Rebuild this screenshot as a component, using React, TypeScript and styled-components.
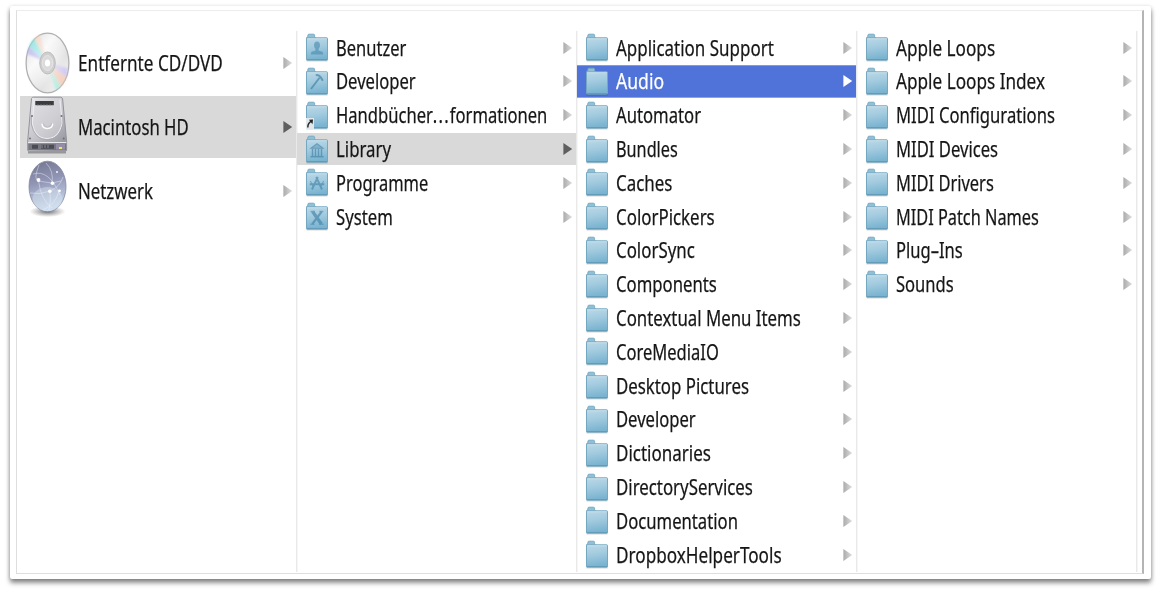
import React, { useLayoutEffect, useRef, useState } from "react";
import styled, { createGlobalStyle } from "styled-components";

const GlobalStyle = createGlobalStyle`
  * { box-sizing: border-box; }
  html, body { margin: 0; background: #fff; overflow: hidden; }
  body { font-family: "Noto Sans", "Open Sans", sans-serif; }
`;

type Tone = "none" | "grey" | "blue";
type Glyph = "user" | "hammer" | "alias" | "library" | "apps" | "system";
type Entry = { name: string; width: number; tone?: Tone; glyph?: Glyph };

const Page = styled.div`
  width: 1158px;
  height: 593px;
  padding: 6px 7px 13px 10px;
`;

const Card = styled.div`
  width: 1141px;
  height: 573px;
  padding: 4px 7px 5px 6px;
  background: #fff;
  border-radius: 2px;
  box-shadow: 0 4px 5px rgba(0, 0, 0, 0.42), 0 1px 4px rgba(0, 0, 0, 0.2);
`;

const Frame = styled.div`
  display: flex;
  width: 1128px;
  height: 564px;
  padding: 20px 0 1px 3px;
  border: 1px solid #dedede;
  border-top-color: #ececec;
  border-right: 2px solid #b4b4b4;
`;

const Column = styled.div<{ $width: number; $top?: number }>`
  display: flex;
  flex-direction: column;
  flex: none;
  width: ${(p) => p.$width}px;
  padding-top: ${(p) => p.$top ?? 0.4}px;
  border-right: 1px solid #e9e9e9;
  box-shadow: 1px 0 0 #f5f5f5;
`;

const rowTone = {
  none: "background: transparent;",
  grey: "background: #d9d9d9;",
  blue: "background: #4f73d9; box-shadow: inset 0 1px #7f99e2, inset 0 -1px #8ba3e6;",
};

const Row = styled.div<{ $tone: Tone }>`
  display: flex;
  align-items: center;
  flex: none;
  height: 32.5px;
  margin-bottom: 1.3px;
  padding: 0 3px 0 9px;
  color: ${(p) => (p.$tone === "blue" ? "#fff" : "#161616")};
  ${(p) => rowTone[p.$tone]}
`;

const DeviceRow = styled(Row)`
  height: 62px;
  margin-bottom: 1.8px;
  padding: 0 3px 0 5px;
`;

const IconSlot = styled.span<{ $width: number }>`
  display: flex;
  flex: none;
  width: ${(p) => p.$width}px;
`;

const LabelBox = styled.span`
  flex: 1;
  min-width: 0;
  height: 32px;
  padding-left: 0.5px;
  line-height: 30px;
`;

const LabelText = styled.span`
  display: inline-block;
  transform-origin: 0 50%;
  font-size: 22px;
  white-space: nowrap;
  -webkit-text-stroke: 0.25px currentColor;
`;

function Label({ text, width }: { text: string; width: number }) {
  const ref = useRef<HTMLSpanElement>(null);
  const [scale, setScale] = useState(0.78);
  useLayoutEffect(() => {
    if (ref.current) setScale((width + 1) / ref.current.offsetWidth);
  }, [text, width]);
  const [head, tail] = text.split("...");
  return (
    <LabelBox>
      <LabelText ref={ref} style={{ transform: `scaleX(${scale})` }}>
        {head}
        {tail && <Dots>...</Dots>}
        {tail}
      </LabelText>
    </LabelBox>
  );
}

const Dots = styled.span`
  letter-spacing: 1.6px;
`;

const ArrowSvg = styled.svg`
  flex: none;
  width: 10px;
  height: 14px;
`;

function Arrow({ tone }: { tone: Tone }) {
  const fill = tone === "blue" ? "#fff" : tone === "grey" ? "#5f5f5f" : "url(#arrowFill)";
  return (
    <ArrowSvg viewBox="0 0 10 14">
      <path d="M.4 .9 9.2 7 .4 13.1Z" fill={fill} />
    </ArrowSvg>
  );
}

const glyphs: Record<Glyph, React.ReactNode> = {
  user: (
    <path d="M11 8.6c-2 0-3 1.5-3 3.6 0 1.5.6 2.8 1.5 3.6v1.6l-3.7 1.4c-.7.3-.9 1.2-.9 2.7h12.2c0-1.5-.2-2.4-.9-2.7l-3.7-1.4v-1.6c.9-.8 1.5-2.1 1.5-3.6 0-2.1-1-3.6-3-3.6Z" fill="#4888ab" opacity=".6" />
  ),
  hammer: (
    <g fill="none" stroke="#3f7fa3" opacity=".65">
      <path d="M5 22 13.6 10.6" strokeWidth="1.8" />
      <path d="M9.8 8.2c2.2-.7 3.8.5 5 2.2l2 3.4" strokeWidth="2.1" />
    </g>
  ),
  alias: (
    <g>
      <rect x="0" y="17" width="8" height="11" fill="#e1e8ec" />
      <path d="M1.8 26.4c0-3.5 1.2-5 3.6-6.2" fill="none" stroke="#2b2b2b" strokeWidth="1.5" />
      <path d="M3 18.8 7 18.4 6.5 23.2Z" fill="#222" />
    </g>
  ),
  library: (
    <g stroke="#4483a6" fill="none" opacity=".65">
      <path d="M5 13.3 11 8.8l6 4.5Z" fill="#6fa5c3" strokeWidth="1.1" />
      <path d="M6.5 14v7M9.5 14v7M12.5 14v7M15.5 14v7" strokeWidth="1.5" />
      <path d="M4.4 21.7h13.2" strokeWidth="1.6" />
    </g>
  ),
  apps: (
    <g stroke="#3f80a5" fill="none" strokeWidth="1.9" opacity=".6">
      <path d="M11.8 9 6 21.5M10.2 9 16 21.5M3.7 16.2h14.6" />
      <path d="M4.5 13 7 18.5M17.5 13 15 18.5" strokeWidth="1" />
    </g>
  ),
  system: (
    <g fill="none" stroke="#3c7da3" opacity=".6">
      <path d="M6.5 9.5 15.4 22" strokeWidth="3.3" />
      <path d="M15.8 9.5 6.3 22" strokeWidth="2.1" />
      <path d="M4.4 9.3H9M13.3 9.3h4.1M4.3 22.2h4.2M13 22.2h4.6" strokeWidth="1" />
    </g>
  ),
};

function Folder({ glyph }: { glyph?: Glyph }) {
  return (
    <svg width="22" height="29" viewBox="0 0 22 29">
      <path d="M.4 27.8h21.2" stroke="#000" strokeOpacity=".16" strokeWidth="1.4" />
      <path d="M.7 7V4.4l1.2-1V2q.2-.8 1-.8h4.6q.9 0 1.1.9v1.6l1 .8V7Z" fill="#91bfd5" stroke="#72a7c0" strokeWidth=".9" />
      <rect x=".5" y="4.8" width="21" height="22.3" rx=".7" fill="url(#folderFill)" stroke="#74a8c1" strokeWidth="1" />
      <path d="M1.4 5.8h19.2" stroke="#cfe4ee" strokeWidth=".8" />
      <path d="M.7 26.7h20.6" stroke="#5e98b5" strokeWidth="1" />
      {glyph && glyphs[glyph]}
    </svg>
  );
}

function Disc() {
  return (
    <svg width="45" height="62" viewBox="0 0 45 62">
      <ellipse cx="22.5" cy="31" rx="21.4" ry="29.8" fill="url(#discFill)" stroke="#b0b0b0" strokeWidth="1.3" />
      <g opacity=".85" filter="url(#sheen)">
        <path d="M22.5 31 4 15Q6 9 9.5 6.6Z" fill="#8ce4e2" />
        <path d="M22.5 31 2.4 22Q2.8 18 4 15Z" fill="#b9b3ee" />
        <path d="M22.5 31 9.5 6.6Q12 4.3 15 3.4Z" fill="#f5d5c2" />
        <path d="M22.5 31 35.5 54.4Q40 50 41.4 45Z" fill="#f3c5ae" />
        <path d="M22.5 31 41.4 45Q42.6 41 42.8 36Z" fill="#c8bdf0" />
        <path d="M22.5 31 30.5 57.8Q33.7 56.6 35.5 54.4Z" fill="#a4eadc" />
      </g>
      <ellipse cx="22.5" cy="31" rx="20.3" ry="28.6" fill="url(#discGlow)" />
      <ellipse cx="22.5" cy="31" rx="7.8" ry="11" fill="#cfcfcf" stroke="#b4b4b4" strokeWidth=".8" />
      <ellipse cx="22.5" cy="31" rx="5.2" ry="7.5" fill="#dadada" stroke="#e6e6e6" />
      <ellipse cx="22.5" cy="31" rx="2.6" ry="3.5" fill="#fff" />
    </svg>
  );
}

function Drive() {
  return (
    <svg width="45" height="62" viewBox="0 0 45 62">
      <path d="M3 56.4h38" stroke="#000" strokeOpacity=".3" strokeWidth="2.4" />
      <path d="M6.5 2.5Q7 1.2 8.5 1.2h27Q37.2 1.2 37.6 3l4 42v9q0 1.2-1.5 1.2H4.3q-1.6 0-1.6-1.2V45Z" fill="url(#driveFill)" stroke="#93939b" strokeWidth="1" />
      <path d="M9.3 3.5 7.3 27Q10 42.5 22 42.5t15.2-15.5L35 3.5" fill="#d8d8dc" fillOpacity=".5" stroke="#ececf0" strokeWidth="1.1" />
      <path d="M6.3 20v8Q9.5 43.5 22 43.8q12.8-.3 16-15.8v-8" fill="none" stroke="#a6a6ae" strokeWidth=".9" />
      <rect x="10.3" y="5" width="18.5" height="4.2" fill="#3b3c3e" />
      <path d="M12 9.2h15.5" stroke="#a0a4a6" strokeWidth="1.1" strokeDasharray="2 1" />
      <path d="M17 27.5q0 5 5.3 5t5.4-5" fill="none" stroke="#fff" strokeWidth="1.4" />
      <path d="M18 27q1 4 4.5 4t4.4-4" fill="none" stroke="#b4b4bb" strokeWidth=".7" />
      <path d="M3.2 47.3h38V54h-38Z" fill="#777780" />
      <path d="M3 46.6h38.3" stroke="#f0f0f4" strokeWidth="1" />
      <path d="M7 48.8v4h6v-4Zm9 0v4h13v-4Z" fill="#4b4b56" />
      <path d="M17 49v3M20 49v3M23 49v3" stroke="#9b9ba8" strokeWidth=".8" />
      <path d="M31 48h9v5.5h-9Z" fill="#958da6" />
      <rect x="34" y="51" width="3" height="2" fill="#f4e65a" />
      <g fill="#707076"><circle cx="5" cy="42.5" r="1" /><circle cx="38.7" cy="42.5" r="1" /><circle cx="7" cy="20" r="1" /><circle cx="36.5" cy="20" r="1" /></g>
    </svg>
  );
}

function Globe() {
  return (
    <svg width="45" height="62" viewBox="0 0 45 62">
      <ellipse cx="22.5" cy="51.5" rx="18" ry="5.6" fill="url(#globeShadow)" />
      <ellipse cx="22.5" cy="26.5" rx="18.5" ry="25.3" fill="url(#globeFill)" stroke="#8387a0" strokeWidth=".8" />
      <ellipse cx="22.5" cy="39" rx="15" ry="12" fill="#dce8f3" opacity=".4" />
      <g fill="none" stroke="#eef2ff" strokeWidth=".9" opacity=".5">
        <path d="M14 5Q8 20 13.5 21T27 23l9-2M8 14q16-5 27 21M13.5 21Q16 40 27 48M27 23Q29 11 21 3M25 31Q15 35 5 33M25 31q10-4 13-14M25 31q1 11-1 19M34 31Q31 44 18 50" />
      </g>
      <g fill="#fff"><circle cx="13.5" cy="20" r="1.9" /><circle cx="27.5" cy="23.2" r="1.8" /><circle cx="24.8" cy="31.3" r="1.8" /><circle cx="34.5" cy="30.8" r="1.4" /><circle cx="32" cy="12" r=".9" /></g>
    </svg>
  );
}

const SharedDefs = styled.svg`
  display: block;
  width: 0;
  height: 0;
`;

function Gradients() {
  return (
    <SharedDefs>
      <defs>
        <filter id="sheen"><feGaussianBlur stdDeviation="1" /></filter>
        <linearGradient id="folderFill" x2=".15" y2="1"><stop stopColor="#bbd9e8" /><stop offset=".45" stopColor="#a3cbdf" /><stop offset="1" stopColor="#79b3d0" /></linearGradient>
        <linearGradient id="arrowFill"><stop stopColor="#ababab" /><stop offset="1" stopColor="#dedede" /></linearGradient>
        <linearGradient id="discFill" x2="1" y2="1"><stop stopColor="#d5d5d5" /><stop offset=".35" stopColor="#f8f8f8" /><stop offset=".65" stopColor="#dedede" /><stop offset="1" stopColor="#fafafa" /></linearGradient>
        <radialGradient id="discGlow"><stop stopColor="#fff" stopOpacity=".6" /><stop offset="1" stopColor="#fff" stopOpacity=".12" /></radialGradient>
        <linearGradient id="driveFill" x2=".7" y2="1"><stop stopColor="#ececf0" /><stop offset=".6" stopColor="#c3c3c9" /><stop offset="1" stopColor="#9898a1" /></linearGradient>
        <linearGradient id="globeFill" x2=".2" y2="1"><stop stopColor="#73758e" /><stop offset=".45" stopColor="#9195b4" /><stop offset="1" stopColor="#c7d8eb" /></linearGradient>
        <radialGradient id="globeShadow"><stop stopColor="#555" stopOpacity=".85" /><stop offset="1" stopColor="#777" stopOpacity="0" /></radialGradient>
      </defs>
    </SharedDefs>
  );
}

const devices = [
  { name: "Entfernte CD/DVD", width: 144, icon: <Disc />, tone: "none" as Tone },
  { name: "Macintosh HD", width: 110, icon: <Drive />, tone: "grey" as Tone },
  { name: "Netzwerk", width: 74, icon: <Globe />, tone: "none" as Tone },
];

const columns: Entry[][] = [
  [
    { name: "Benutzer", width: 69.5, glyph: "user" },
    { name: "Developer", width: 79, glyph: "hammer" },
    { name: "Handbücher...formationen", width: 210, glyph: "alias" },
    { name: "Library", width: 54, glyph: "library", tone: "grey" },
    { name: "Programme", width: 91, glyph: "apps" },
    { name: "System", width: 56, glyph: "system" },
  ],
  [
    { name: "Application Support", width: 157 },
    { name: "Audio", width: 47, tone: "blue" },
    { name: "Automator", width: 84 },
    { name: "Bundles", width: 61 },
    { name: "Caches", width: 55 },
    { name: "ColorPickers", width: 98 },
    { name: "ColorSync", width: 78 },
    { name: "Components", width: 100 },
    { name: "Contextual Menu Items", width: 184 },
    { name: "CoreMediaIO", width: 102 },
    { name: "Desktop Pictures", width: 132 },
    { name: "Developer", width: 79 },
    { name: "Dictionaries", width: 94 },
    { name: "DirectoryServices", width: 136 },
    { name: "Documentation", width: 121 },
    { name: "DropboxHelperTools", width: 165 },
  ],
  [
    { name: "Apple Loops", width: 98 },
    { name: "Apple Loops Index", width: 148 },
    { name: "MIDI Configurations", width: 158 },
    { name: "MIDI Devices", width: 101 },
    { name: "MIDI Drivers", width: 97 },
    { name: "MIDI Patch Names", width: 142 },
    { name: "Plug–Ins", width: 66 },
    { name: "Sounds", width: 57 },
  ],
];

export default function App() {
  return (
    <Page>
      <GlobalStyle />
      <Gradients />
      <Card>
        <Frame>
          <Column $width={277} $top={1}>
            {devices.map((d) => (
              <DeviceRow key={d.name} $tone={d.tone}>
                <IconSlot $width={52}>{d.icon}</IconSlot>
                <Label text={d.name} width={d.width} />
                <Arrow tone={d.tone} />
              </DeviceRow>
            ))}
          </Column>
          {columns.map((entries, i) => (
            <Column key={i} $width={280}>
              {entries.map((e) => (
                <Row key={e.name} $tone={e.tone ?? "none"}>
                  <IconSlot $width={29}><Folder glyph={e.glyph} /></IconSlot>
                  <Label text={e.name} width={e.width} />
                  <Arrow tone={e.tone ?? "none"} />
                </Row>
              ))}
            </Column>
          ))}
        </Frame>
      </Card>
    </Page>
  );
}
